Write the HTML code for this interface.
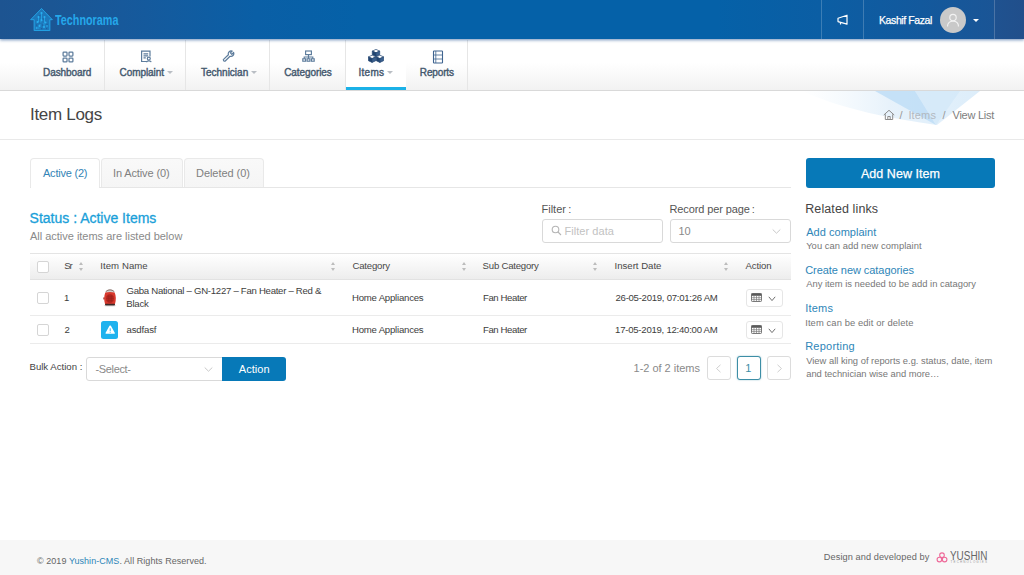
<!DOCTYPE html>
<html lang="en">
<head>
<meta charset="utf-8">
<title>Item Logs - Technorama</title>
<style>
*{box-sizing:border-box;margin:0;padding:0}
html,body{width:1024px;height:575px;overflow:hidden;background:#fff}
body{font-family:"Liberation Sans","DejaVu Sans",sans-serif;color:#333;position:relative;font-size:12px}
.abs{position:absolute;white-space:nowrap}
#hdr{position:absolute;left:0;top:0;width:1024px;height:39px;background:linear-gradient(90deg,#1d5491 0%,#1b5694 5%,#17599b 12%,#0a5fa6 25%,#0561a8 35%,#0561a8 70%,#0b5ea4 80%,#13599d 90%,#1a5596 97%,#1f5290 97.1%,#214f8b 100%);box-shadow:0 1px 3px rgba(20,70,140,.6);z-index:5}
#hdr .logo-t{position:absolute;left:54.5px;top:10px;font-size:16px;line-height:20px;font-weight:bold;color:#29abe8;transform:scaleX(.76);transform-origin:0 0}
#hdr .vsep{position:absolute;top:0;width:1px;height:39px;background:rgba(255,255,255,.2)}
#hdr .avatar{position:absolute;left:940px;top:7px;width:26px;height:26px;border-radius:50%;background:#c9c9c9}
#hdr .caret{position:absolute;left:973px;top:18.500px;width:0;height:0;border-left:3.200px solid transparent;border-right:3.200px solid transparent;border-top:3.600px solid #fff}
#nav{position:absolute;left:0;top:40px;width:1024px;height:51px;background:linear-gradient(#fff 0%,#fff 45%,#f2f2f2 100%);border-bottom:1px solid #d9d9d9}
#nav .it{position:absolute;top:0;height:50px;border-right:1px solid #e6e6e6}
#nav .it.act{background:#fff;border-bottom:3px solid #1bb1e7}
.sc{position:absolute;top:71px;width:0;height:0;border-left:3px solid transparent;border-right:3px solid transparent;border-top:3px solid #b9bec4}
#tb{position:absolute;left:0;top:91px;width:1024px;height:49px;background:#fff;border-bottom:1px solid #e9e9e9;overflow:hidden}
.tab{position:absolute;top:158px;height:30px;border:1px solid #e9e9e9;border-bottom:none;border-radius:4px 4px 0 0;background:linear-gradient(#f9f9f9,#f5f5f5)}
.tab.on{background:#fff;height:30px}
#tabline{position:absolute;left:30px;top:187px;width:761px;height:1px;background:#e6e6e6}
#th{position:absolute;left:30px;top:253px;width:761px;height:27px;background:linear-gradient(#fff,#ededed);border-top:1px solid #e4e4e4;border-bottom:1px solid #e2e2e2}
.hl{position:absolute;height:1px;background:#ebebeb;left:30px;width:761px}
.cb{position:absolute;width:12px;height:12px;border:1px solid #d5d5d5;border-radius:2px;background:#fff}
.sort{position:absolute;width:5.600px;height:9px}
.sort:before,.sort:after{content:"";position:absolute;left:0;border-left:2.800px solid transparent;border-right:2.800px solid transparent}
.sort:before{top:0;border-bottom:3.400px solid #bcbcbc}
.sort:after{bottom:0;border-top:3.400px solid #bcbcbc}
.inp{position:absolute;border:1px solid #d9d9d9;border-radius:3px;background:#fff}
.ab{width:36.500px;height:18px;border-color:#e6e6e6;border-radius:3px}
.btn{position:absolute;background:#0779b8;border-radius:3px}
.pg{position:absolute;top:356px;width:24px;height:24px;border:1px solid #dcdcdc;border-radius:3px;background:#fff}
#ft{position:absolute;left:0;top:540px;width:1024px;height:35px;background:#f7f7f7}
</style>
</head>
<body>
<div id="hdr">
  <svg class="abs" style="left:29px;top:7px" width="25" height="25" viewBox="0 0 25 25">
    <path d="M12.500 1 L24 13 H21.300 V24 H4.700 V13 H1 Z" fill="#1f95dc" opacity=".55"/>
    <path d="M12.500 1.500 L23.300 12.700 H20.800 V23.500 H5.200 V12.700 H1.700 Z" fill="none" stroke="#23a3e6" stroke-width="1" stroke-linejoin="round" opacity=".9"/>
    <g fill="#2ab0f0"><circle cx="12.500" cy="6" r="1.100"/><circle cx="9.500" cy="10" r="1"/><circle cx="15.500" cy="10" r="1"/><circle cx="12.500" cy="13" r="1.100"/><circle cx="8.500" cy="15" r="1"/><circle cx="16.500" cy="15.500" r="1"/><circle cx="10.500" cy="19" r="1.100"/><circle cx="15" cy="20" r="1"/><circle cx="18" cy="19" r=".800"/><circle cx="7.500" cy="21" r=".800"/></g>
    <g stroke="#2ab0f0" stroke-width=".700" fill="none"><path d="M12.500 6 V13 M9.500 10 V15 H8.500 M15.500 10 V15.500 H16.500 M12.500 13 L10.500 19 M15 20 V16 M7.500 21 H10.500"/></g>
    <g fill="#1b5a9c" opacity=".8"><rect x="10.300" y="8" width="1.200" height="1.200"/><rect x="13.500" y="11.500" width="1.200" height="1.200"/><rect x="10.500" y="15.500" width="1.300" height="1.300"/><rect x="13" y="17.500" width="1.200" height="1.200"/><rect x="7" y="17.500" width="1.200" height="1.200"/><rect x="17.500" y="16.800" width="1.200" height="1.200"/><rect x="12" y="21" width="1.300" height="1.300"/><rect x="17" y="21" width="1.200" height="1.200"/></g>
  </svg>
  <div class="vsep" style="left:821px"></div>
  <div class="vsep" style="left:863px"></div>
  <div class="vsep" style="left:994px"></div>
  <svg class="abs" style="left:836px;top:13px" width="14" height="14" viewBox="0 0 14 14" fill="none" stroke="#fff" stroke-width="1.2" stroke-linejoin="round"><path d="M2 5.2 L11 2.2 V11.2 L2 8.600 Z"/><path d="M4.500 9.300 V11.500"/></svg>
  <div class="avatar"><svg width="26" height="26" viewBox="0 0 26 26" fill="none" stroke="#f2f2f2" stroke-width="1.150"><circle cx="13" cy="10.500" r="3.200"/><path d="M7.500 19.500 C7.500 15.500 10 14.200 13 14.200 C16 14.200 18.500 15.500 18.500 19.500"/></svg></div>
  <div class="caret"></div>
</div>

<div id="nav">
  <div class="it" style="left:30px;width:75px"></div>
  <div class="it" style="left:105px;width:81px"></div>
  <div class="it" style="left:186px;width:84px"></div>
  <div class="it" style="left:270px;width:76px"></div>
  <div class="it act" style="left:346px;width:60px;border-right:none"></div>
  <div class="it" style="left:406px;width:62px"></div>
</div>
<svg class="abs" style="left:62px;top:50.500px" width="12" height="12" viewBox="0 0 12 12" fill="none" stroke="#5d7c9c" stroke-width="1.250"><rect x="1.100" y="1.100" width="3.900" height="3.900" rx=".700"/><rect x="7" y="1.100" width="3.900" height="3.900" rx=".700"/><rect x="1.100" y="7" width="3.900" height="3.900" rx=".700"/><rect x="7" y="7" width="3.900" height="3.900" rx=".700"/></svg>
<svg class="abs" style="left:139.500px;top:49.500px" width="13" height="13" viewBox="0 0 13 13" fill="none" stroke="#5d7c9c" stroke-width="1.200"><path d="M7 11.500 H1.600 V1.200 H10 V6.500"/><path d="M3.500 3.800 H8.200 M3.500 5.800 H8.200 M3.500 7.800 H5.800"/><circle cx="8.800" cy="8.600" r="1.500"/><path d="M6.600 12.200 C6.800 10.500 10.800 10.500 11.200 12.200"/></svg>
<svg class="abs" style="left:222px;top:50px" width="13" height="12" viewBox="0 0 13 12" fill="none" stroke="#5d7c9c" stroke-width="1.200" stroke-linejoin="round"><path d="M1.300 9.600 L6.400 4.700 A2.900 2.900 0 0 1 10.200 1.100 L8.400 2.900 L9.800 4.300 L11.600 2.500 A2.900 2.900 0 0 1 8 6.300 L3 11.200 Q1.800 11.600 1.300 9.600 Z"/></svg>
<svg class="abs" style="left:301.500px;top:50px" width="13" height="12" viewBox="0 0 13 12" fill="none" stroke="#5d7c9c" stroke-width="1.150"><rect x="3.600" y="1" width="5.800" height="3.600"/><path d="M6.500 4.600 V7 M2.200 8.800 V7 H10.800 V8.800 M6.500 7 V8.800"/><rect x=".800" y="8.800" width="2.800" height="2.400"/><rect x="5.100" y="8.800" width="2.800" height="2.400"/><rect x="9.400" y="8.800" width="2.800" height="2.400"/></svg>
<svg class="abs" style="left:367.500px;top:49.300px" width="16" height="14" viewBox="0 0 16 14"><g stroke="#254873" stroke-width=".700" stroke-linejoin="round"><path d="M8 .400 L11.700 2.100 L8 3.800 L4.300 2.100 Z" fill="#fff"/><path d="M4.300 2.100 L8 3.800 V7.400 L4.300 5.700 Z" fill="#1f4470"/><path d="M11.700 2.100 L8 3.800 V7.400 L11.700 5.700 Z" fill="#3a608e"/><path d="M4.100 6.200 L7.800 7.900 L4.100 9.600 L.400 7.900 Z" fill="#fff"/><path d="M.400 7.900 L4.100 9.600 V13.400 L.400 11.700 Z" fill="#1f4470"/><path d="M7.800 7.900 L4.100 9.600 V13.400 L7.800 11.700 Z" fill="#3a608e"/><path d="M11.900 6.200 L15.600 7.900 L11.900 9.600 L8.200 7.900 Z" fill="#fff"/><path d="M8.200 7.900 L11.900 9.600 V13.400 L8.200 11.700 Z" fill="#1f4470"/><path d="M15.600 7.900 L11.900 9.600 V13.400 L15.600 11.700 Z" fill="#3a608e"/></g></svg>
<svg class="abs" style="left:431.500px;top:49.500px" width="12" height="14" viewBox="0 0 12 14" fill="none" stroke="#3f6490" stroke-width="1.100"><rect x="1.500" y="1" width="9" height="12" rx=".600"/><path d="M1.500 5 H10.500 M1.500 9 H10.500 M3.800 1 V13" stroke-width=".800"/></svg>
<div class="sc" style="left:167px"></div>
<div class="sc" style="left:251px"></div>
<div class="sc" style="left:386.500px"></div>

<div id="tb">
  <svg class="abs" style="left:780px;top:0" width="244" height="48" viewBox="0 0 244 48">
    <defs><linearGradient id="sw" x1="0" y1="0" x2="1" y2="0"><stop offset="0" stop-color="#e6f3fc" stop-opacity="0"/><stop offset=".5" stop-color="#dcecf9" stop-opacity=".7"/><stop offset="1" stop-color="#d4e9f9" stop-opacity=".8"/></linearGradient></defs>
    <path d="M22 0 L200 0 L157 34 C130 30 70 22 22 0 Z" fill="url(#sw)"/>
    <path d="M95 0 L135 0 L156 34 Z" fill="#b9dbf5" opacity=".75"/>
    <path d="M135 0 L180 0 L156 34 Z" fill="#cfe6f8" opacity=".6"/>
  </svg>
  <svg class="abs" style="left:882.500px;top:17.500px" width="12" height="12" viewBox="0 0 12 12" fill="none" stroke="#8a8a8a" stroke-width="1"><path d="M0.800 6 L6 1.300 L11.200 6"/><path d="M2.300 5.300 V10.500 H9.700 V5.300"/><path d="M4.800 10.500 V7.500 H7.200 V10.500"/></svg>
</div>

<div class="tab on" style="left:30px;width:70px"></div>
<div class="tab" style="left:100.500px;width:82px"></div>
<div class="tab" style="left:183.500px;width:80px"></div>
<div id="tabline"></div>
<div class="abs" style="left:31px;top:187px;width:68px;height:1px;background:#fff"></div>

<div class="inp" style="left:542px;top:219px;width:121px;height:24px"></div>
<svg class="abs" style="left:551px;top:225px" width="11" height="11" viewBox="0 0 11 11" fill="none" stroke="#b5b5b5" stroke-width="1.100"><circle cx="4.500" cy="4.500" r="3.300"/><path d="M7 7 L10 10"/></svg>
<div class="inp" style="left:670px;top:219px;width:121px;height:24px"></div>
<svg class="abs" style="left:772px;top:227.500px" width="9" height="7" viewBox="0 0 9 7" fill="none" stroke="#c8c8c8" stroke-width="1"><path d="M0.700 1.500 L4.500 5.200 L8.300 1.500"/></svg>

<div id="th"></div>
<div class="cb" style="left:37px;top:261px"></div>
<div class="sort" style="left:79px;top:262.200px"></div>
<div class="sort" style="left:331px;top:262.200px"></div>
<div class="sort" style="left:462.200px;top:262.200px"></div>
<div class="sort" style="left:593.200px;top:262.200px"></div>
<div class="sort" style="left:724px;top:262.200px"></div>

<div class="cb" style="left:37px;top:291.500px"></div>
<svg class="abs" style="left:102px;top:289px" width="16" height="18" viewBox="0 0 16 18"><ellipse cx="8" cy="16.600" rx="6.300" ry="1.200" fill="#dcdcdc" opacity=".7"/><path d="M3.600 3.800 Q4 .400 8 .300 Q12 .400 12.400 3.800 Z" fill="#d4ccc8"/><path d="M3.700 2.600 Q8 -.900 12.300 2.600" stroke="#6a4a44" stroke-width=".700" fill="none"/><path d="M3.300 3.500 Q8 2.700 12.700 3.500 Q14.900 9.300 12.900 15.200 H3.100 Q1.100 9.300 3.300 3.500 Z" fill="#d8392d"/><ellipse cx="8" cy="9.600" rx="3.900" ry="4.300" fill="#b82a22"/><path d="M4.500 7.800 H11.500 M4.200 9.700 H11.800 M4.600 11.600 H11.400 M6.400 5.800 V13.400 M8 5.400 V13.800 M9.600 5.800 V13.400" stroke="#96201a" stroke-width=".500" fill="none"/><rect x="3" y="14.800" width="10" height="1.800" rx=".800" fill="#3e2a28"/><rect x="1.300" y="8.300" width="1.300" height="2.200" rx=".600" fill="#a8352d"/></svg>
<div class="inp ab" style="left:746px;top:288.500px"></div><svg class="abs" style="left:751px;top:293px" width="11" height="9" viewBox="0 0 11 9"><rect x=".500" y=".500" width="10" height="8" rx=".800" fill="#fff" stroke="#6a6a6a" stroke-width=".900"/><rect x=".500" y=".500" width="10" height="2.300" fill="#5a5a5a"/><path d="M.500 4.700 H10.500 M.500 6.600 H10.500 M3 2.800 V8.500 M5.500 2.800 V8.500 M8 2.800 V8.500" stroke="#7a7a7a" stroke-width=".700" fill="none"/></svg><svg class="abs" style="left:768px;top:296px" width="8" height="6" viewBox="0 0 8 6" fill="none" stroke="#6f6f6f" stroke-width="1"><path d="M.800 .800 L4 4.600 L7.200 .800"/></svg>
<div class="hl" style="top:315px"></div>

<div class="cb" style="left:37px;top:323.500px"></div>
<div class="abs" style="left:100.700px;top:321px;width:17px;height:17.600px;border-radius:2.500px;background:#1fb2ee"></div>
<svg class="abs" style="left:104.500px;top:324.800px" width="10.400" height="9.200" viewBox="0 0 10.400 9.200"><path d="M5.200 .600 Q5.600 .300 5.900 .800 L9.900 8 Q10.100 8.700 9.400 8.800 H1 Q.300 8.700 .500 8 L4.500 .800 Q4.800 .300 5.200 .600 Z" fill="#fff"/><rect x="4.750" y="3.300" width=".900" height="2.800" fill="#1fb2ee"/><rect x="4.750" y="6.800" width=".900" height=".900" fill="#1fb2ee"/></svg>
<div class="inp ab" style="left:746px;top:321px"></div><svg class="abs" style="left:751px;top:325.2px" width="11" height="9" viewBox="0 0 11 9"><rect x=".500" y=".500" width="10" height="8" rx=".800" fill="#fff" stroke="#6a6a6a" stroke-width=".900"/><rect x=".500" y=".500" width="10" height="2.300" fill="#5a5a5a"/><path d="M.500 4.700 H10.500 M.500 6.600 H10.500 M3 2.800 V8.500 M5.500 2.800 V8.500 M8 2.800 V8.500" stroke="#7a7a7a" stroke-width=".700" fill="none"/></svg><svg class="abs" style="left:768px;top:328.2px" width="8" height="6" viewBox="0 0 8 6" fill="none" stroke="#6f6f6f" stroke-width="1"><path d="M.800 .800 L4 4.600 L7.200 .800"/></svg>
<div class="hl" style="top:343px"></div>

<div class="inp" style="left:86px;top:357px;width:137px;height:24px;border-radius:3px 0 0 3px"></div>
<svg class="abs" style="left:203.500px;top:365.500px" width="9" height="7" viewBox="0 0 9 7" fill="none" stroke="#c8c8c8" stroke-width="1"><path d="M0.700 1.500 L4.500 5.200 L8.300 1.500"/></svg>
<div class="btn" style="left:222px;top:357px;width:64px;height:24px;border-radius:0 3px 3px 0"></div>

<div class="pg" style="left:706.500px"></div>
<div class="pg" style="left:736.500px;border-color:#3d8ea6;box-shadow:0 0 1.500px rgba(61,142,166,.7)"></div>
<div class="pg" style="left:767px"></div>
<svg class="abs" style="left:715px;top:364px" width="7" height="9" viewBox="0 0 7 9" fill="none" stroke="#cfcfcf" stroke-width="1"><path d="M5.500 0.800 L1.500 4.500 L5.500 8.200"/></svg>
<svg class="abs" style="left:776px;top:364px" width="7" height="9" viewBox="0 0 7 9" fill="none" stroke="#cfcfcf" stroke-width="1"><path d="M1.500 0.800 L5.500 4.500 L1.500 8.200"/></svg>

<div class="btn" style="left:806px;top:158px;width:189px;height:30px"></div>

<div id="ft">
  <svg class="abs" style="left:935.500px;top:11.500px" width="12" height="11" viewBox="0 0 12 11" fill="none" stroke="#ee6a9a" stroke-width="1.100"><circle cx="6" cy="3.200" r="2.300"/><circle cx="3.400" cy="7.600" r="2.300"/><circle cx="8.600" cy="7.600" r="2.300"/></svg>
  <div class="abs" style="left:950.500px;top:20.200px;font-size:3px;line-height:4px;color:#999;letter-spacing:1.150px">TECHNOLOGIES</div>
</div>

<div style="position:absolute;left:0;top:0;z-index:10">
<div class="abs" style="left:55.40px;top:9.71px;font-size:14.8px;font-weight:bold;line-height:20px;transform:scaleX(0.7299);transform-origin:0 0;color:#25a8ea;">Technorama</div>
<div class="abs" style="left:879.00px;top:10.08px;font-size:10.5px;font-weight:normal;line-height:20px;letter-spacing:-0.400px;color:#fff;-webkit-text-stroke:.25px #fff;">Kashif Fazal</div>
<div class="abs" style="left:43.10px;top:62.70px;font-size:10px;font-weight:normal;line-height:20px;letter-spacing:-0.087px;color:#44586e;-webkit-text-stroke:.4px #44586e;">Dashboard</div>
<div class="abs" style="left:119.50px;top:62.70px;font-size:10px;font-weight:normal;line-height:20px;letter-spacing:-0.062px;color:#44586e;-webkit-text-stroke:.4px #44586e;">Complaint</div>
<div class="abs" style="left:200.90px;top:62.70px;font-size:10px;font-weight:normal;line-height:20px;letter-spacing:0.011px;color:#44586e;-webkit-text-stroke:.4px #44586e;">Technician</div>
<div class="abs" style="left:284.20px;top:62.70px;font-size:10px;font-weight:normal;line-height:20px;letter-spacing:-0.078px;color:#44586e;-webkit-text-stroke:.4px #44586e;">Categories</div>
<div class="abs" style="left:358.50px;top:62.70px;font-size:10px;font-weight:normal;line-height:20px;letter-spacing:0.275px;color:#44586e;-webkit-text-stroke:.4px #44586e;">Items</div>
<div class="abs" style="left:419.80px;top:62.70px;font-size:10px;font-weight:normal;line-height:20px;letter-spacing:-0.133px;color:#44586e;-webkit-text-stroke:.4px #44586e;">Reports</div>
<div class="abs" style="left:30.00px;top:105.12px;font-size:17px;font-weight:normal;line-height:20px;letter-spacing:-0.300px;color:#454545;">Item Logs</div>
<div class="abs" style="left:899.50px;top:104.86px;font-size:11px;font-weight:normal;line-height:20px;letter-spacing:1.000px;color:#999;">/</div>
<div class="abs" style="left:908.40px;top:104.86px;font-size:11px;font-weight:normal;line-height:20px;letter-spacing:0.150px;color:#b3b9bf;">Items</div>
<div class="abs" style="left:942.40px;top:104.86px;font-size:11px;font-weight:normal;line-height:20px;letter-spacing:1.000px;color:#999;">/</div>
<div class="abs" style="left:952.50px;top:104.86px;font-size:11px;font-weight:normal;line-height:20px;letter-spacing:-0.263px;color:#7d7d7d;">View List</div>
<div class="abs" style="left:43.00px;top:163.46px;font-size:11px;font-weight:normal;line-height:20px;letter-spacing:-0.222px;color:#3384b6;">Active (2)</div>
<div class="abs" style="left:113.00px;top:163.46px;font-size:11px;font-weight:normal;line-height:20px;letter-spacing:-0.125px;color:#808080;">In Active (0)</div>
<div class="abs" style="left:196.00px;top:163.46px;font-size:11px;font-weight:normal;line-height:20px;letter-spacing:-0.050px;color:#808080;">Deleted (0)</div>
<div class="abs" style="left:29.60px;top:207.94px;font-size:14px;font-weight:normal;line-height:20px;letter-spacing:-0.005px;color:#1a9fd9;-webkit-text-stroke:.3px #1a9fd9;">Status : Active Items</div>
<div class="abs" style="left:30.00px;top:226.06px;font-size:11px;font-weight:normal;line-height:20px;letter-spacing:-0.016px;color:#8a8a8a;">All active items are listed below</div>
<div class="abs" style="left:541.50px;top:199.46px;font-size:11px;font-weight:normal;line-height:20px;letter-spacing:0.000px;color:#555;">Filter&#8201;:</div>
<div class="abs" style="left:669.50px;top:199.46px;font-size:11px;font-weight:normal;line-height:20px;letter-spacing:-0.114px;color:#555;">Record per page&#8201;:</div>
<div class="abs" style="left:564.50px;top:220.86px;font-size:11px;font-weight:normal;line-height:20px;letter-spacing:0.050px;color:#c2c2c2;">Filter data</div>
<div class="abs" style="left:678.50px;top:220.86px;font-size:11px;font-weight:normal;line-height:20px;letter-spacing:0.000px;color:#8a8a8a;">10</div>
<div class="abs" style="left:64.30px;top:255.92px;font-size:9.6px;font-weight:normal;line-height:20px;letter-spacing:-1.100px;color:#484848;">Sr</div>
<div class="abs" style="left:100.20px;top:255.92px;font-size:9.6px;font-weight:normal;line-height:20px;letter-spacing:0.075px;color:#484848;">Item Name</div>
<div class="abs" style="left:352.50px;top:255.92px;font-size:9.6px;font-weight:normal;line-height:20px;letter-spacing:-0.214px;color:#484848;">Category</div>
<div class="abs" style="left:482.60px;top:255.92px;font-size:9.6px;font-weight:normal;line-height:20px;letter-spacing:-0.218px;color:#484848;">Sub Category</div>
<div class="abs" style="left:614.50px;top:255.92px;font-size:9.6px;font-weight:normal;line-height:20px;letter-spacing:0.000px;color:#484848;">Insert Date</div>
<div class="abs" style="left:745.50px;top:255.92px;font-size:9.6px;font-weight:normal;line-height:20px;letter-spacing:-0.100px;color:#484848;">Action</div>
<div class="abs" style="left:64.00px;top:287.52px;font-size:9.6px;font-weight:normal;line-height:20px;letter-spacing:-0.500px;color:#3d3d3d;">1</div>
<div class="abs" style="left:126.50px;top:280.72px;font-size:9.6px;font-weight:normal;line-height:20px;letter-spacing:-0.279px;color:#3d3d3d;">Gaba National – GN-1227 – Fan Heater – Red &amp;</div>
<div class="abs" style="left:126.30px;top:294.12px;font-size:9.6px;font-weight:normal;line-height:20px;letter-spacing:-0.250px;color:#3d3d3d;">Black</div>
<div class="abs" style="left:352.00px;top:287.52px;font-size:9.6px;font-weight:normal;line-height:20px;letter-spacing:-0.214px;color:#3d3d3d;">Home Appliances</div>
<div class="abs" style="left:483.00px;top:287.52px;font-size:9.6px;font-weight:normal;line-height:20px;letter-spacing:-0.417px;color:#3d3d3d;">Fan Heater</div>
<div class="abs" style="left:615.50px;top:287.52px;font-size:9.6px;font-weight:normal;line-height:20px;letter-spacing:-0.273px;color:#3d3d3d;">26-05-2019, 07:01:26 AM</div>
<div class="abs" style="left:64.50px;top:319.72px;font-size:9.6px;font-weight:normal;line-height:20px;letter-spacing:0.000px;color:#3d3d3d;">2</div>
<div class="abs" style="left:126.50px;top:319.72px;font-size:9.6px;font-weight:normal;line-height:20px;letter-spacing:-0.167px;color:#3d3d3d;">asdfasf</div>
<div class="abs" style="left:352.00px;top:319.72px;font-size:9.6px;font-weight:normal;line-height:20px;letter-spacing:-0.214px;color:#3d3d3d;">Home Appliances</div>
<div class="abs" style="left:483.00px;top:319.72px;font-size:9.6px;font-weight:normal;line-height:20px;letter-spacing:-0.417px;color:#3d3d3d;">Fan Heater</div>
<div class="abs" style="left:615.10px;top:319.72px;font-size:9.6px;font-weight:normal;line-height:20px;letter-spacing:-0.255px;color:#3d3d3d;">17-05-2019, 12:40:00 AM</div>
<div class="abs" style="left:29.50px;top:357.12px;font-size:9.6px;font-weight:normal;line-height:20px;letter-spacing:0.000px;color:#444;">Bulk Action :</div>
<div class="abs" style="left:95.50px;top:359.36px;font-size:11px;font-weight:normal;line-height:20px;letter-spacing:-0.357px;color:#8a8a8a;">-Select-</div>
<div class="abs" style="left:238.75px;top:359.06px;font-size:11px;font-weight:normal;line-height:20px;letter-spacing:0.050px;color:#fff;">Action</div>
<div class="abs" style="left:633.60px;top:357.86px;font-size:11px;font-weight:normal;line-height:20px;letter-spacing:-0.023px;color:#8a8a8a;">1-2 of 2 items</div>
<div class="abs" style="left:745.30px;top:358.36px;font-size:11px;font-weight:normal;line-height:20px;letter-spacing:-1.000px;color:#3d8ea6;">1</div>
<div class="abs" style="left:861.00px;top:164.00px;font-size:12.5px;font-weight:normal;line-height:20px;letter-spacing:0.036px;color:#fff;-webkit-text-stroke:.25px #fff;">Add New Item</div>
<div class="abs" style="left:805.20px;top:199.20px;font-size:12.5px;font-weight:normal;line-height:20px;letter-spacing:0.108px;color:#444;">Related links</div>
<div class="abs" style="left:806.20px;top:221.76px;font-size:11px;font-weight:normal;line-height:20px;letter-spacing:0.033px;color:#2e86b8;">Add complaint</div>
<div class="abs" style="left:806.20px;top:236.32px;font-size:9.4px;font-weight:normal;line-height:20px;letter-spacing:0.042px;color:#777;">You can add new complaint</div>
<div class="abs" style="left:805.20px;top:259.86px;font-size:11px;font-weight:normal;line-height:20px;letter-spacing:-0.060px;color:#2e86b8;">Create new catagories</div>
<div class="abs" style="left:806.20px;top:274.42px;font-size:9.4px;font-weight:normal;line-height:20px;letter-spacing:-0.005px;color:#777;">Any item is needed to be add in catagory</div>
<div class="abs" style="left:805.20px;top:298.36px;font-size:11px;font-weight:normal;line-height:20px;letter-spacing:0.200px;color:#2e86b8;">Items</div>
<div class="abs" style="left:805.20px;top:312.72px;font-size:9.4px;font-weight:normal;line-height:20px;letter-spacing:0.100px;color:#777;">Item can be edit or delete</div>
<div class="abs" style="left:805.20px;top:336.46px;font-size:11px;font-weight:normal;line-height:20px;letter-spacing:0.225px;color:#2e86b8;">Reporting</div>
<div class="abs" style="left:806.20px;top:351.02px;font-size:9.4px;font-weight:normal;line-height:20px;letter-spacing:-0.004px;color:#777;">View all king of reports e.g. status, date, item</div>
<div class="abs" style="left:806.20px;top:364.12px;font-size:9.4px;font-weight:normal;line-height:20px;letter-spacing:-0.007px;color:#777;">and technician wise and more…</div>
<div class="abs" style="left:37.00px;top:550.94px;font-size:9px;font-weight:normal;line-height:20px;letter-spacing:0.053px;color:#666;">© 2019 <span style="color:#2e86b8">Yushin-CMS</span>. All Rights Reserved.</div>
<div class="abs" style="left:823.80px;top:546.83px;font-size:9.2px;font-weight:normal;line-height:20px;letter-spacing:0.082px;color:#666;">Design and developed by</div>
<div class="abs" style="left:949.80px;top:546.20px;font-size:12.5px;font-weight:normal;line-height:20px;transform:scaleX(0.7935);transform-origin:0 0;color:#666;">YUSHIN</div>
</div>
</body>
</html>
